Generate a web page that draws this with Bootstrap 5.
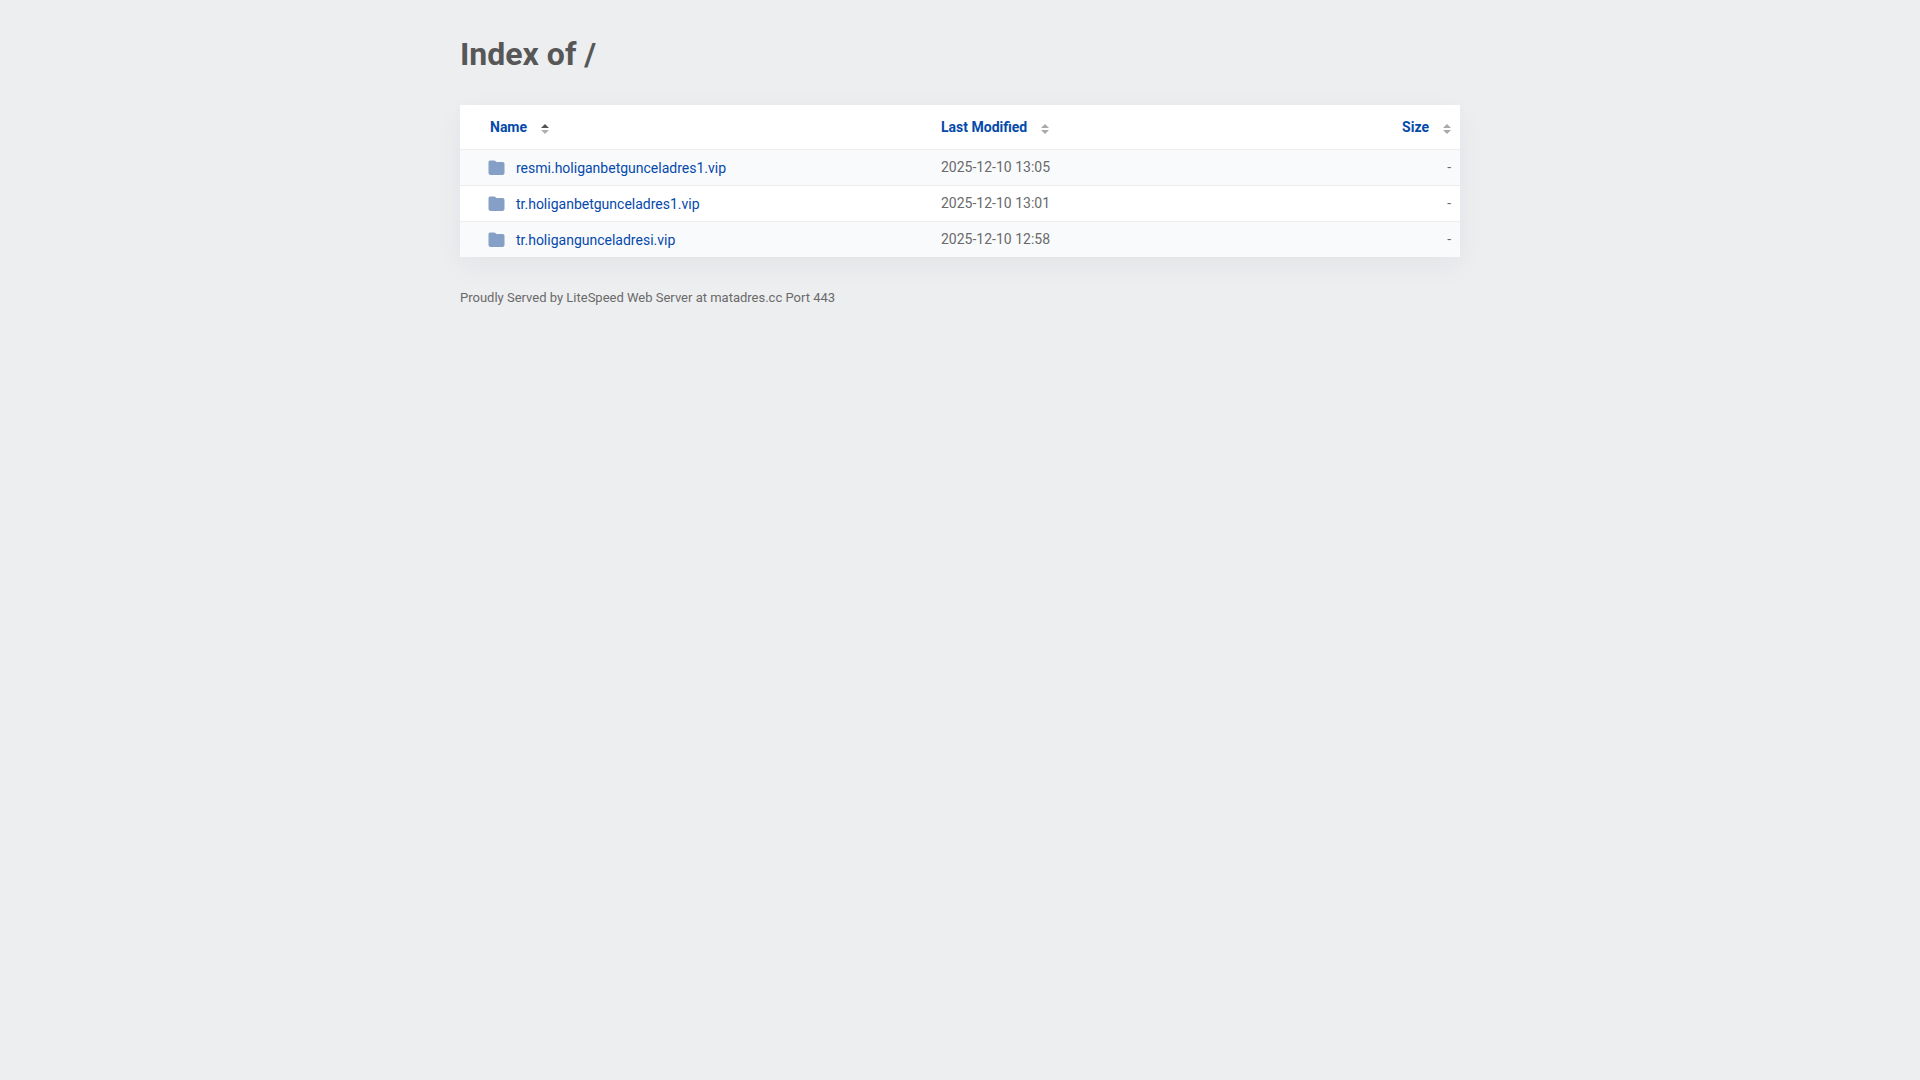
<!DOCTYPE html>
<html lang="en">
<head>
<meta charset="utf-8">
<meta name="viewport" content="width=device-width, initial-scale=1">
<title>Index of /</title>
<link href="https://cdn.jsdelivr.net/npm/bootstrap@5.3.0/dist/css/bootstrap.min.css" rel="stylesheet">
<style>
body { background: #edeef0; color: #575757; font: 14px/20px Roboto, sans-serif; }
.page { max-width: 1000px; }
h1 { font-size: 32px; line-height: 37px; color: #575757; }
a { color: #0449ab; }
a:hover { text-decoration: underline !important; }
.listing { background: #fff; box-shadow: 0 8px 26px rgba(0,40,50,.05); table-layout: fixed; color: #6a6a6a; }
.listing th { height: 44px; padding: 0 8px; vertical-align: middle; }
.listing td { height: 36px; padding: 0 8px; border-top: 1px solid #ebedef; vertical-align: middle; }
.listing th:first-child { padding-left: 30px; }
.listing td:first-child { padding-left: 28px; }
.listing th:last-child, .listing td:last-child { padding-right: 9px; }
.listing tbody tr:nth-child(odd) { background: #f9fafc; }
.c-name { width: 473px; }
.c-size { width: 120px; }
.sorter { margin: 2px 0 0 14px; }
.entry { gap: 11px; }
.foot { font-size: 13px; line-height: 18px; color: #6a6a6a; }
</style>
</head>
<body>
<main class="page container-fluid px-0 pt-1">
  <h1 class="fw-bold mb-0 py-4 mt-2">Index of /</h1>
  <table class="listing w-100 mt-2">
    <colgroup><col class="c-name"><col><col class="c-size"></colgroup>
    <thead><tr>
      <th scope="col"><a href="#" class="text-decoration-none">Name<svg class="sorter" width="8" height="10" viewBox="0 0 8 10" aria-hidden="true"><path d="M0 4 4 0l4 4z" fill="#545454"/><path d="M0 6h8L4 10z" fill="#b0b0b0"/></svg></a></th>
      <th scope="col"><a href="#" class="text-decoration-none">Last Modified<svg class="sorter" width="8" height="10" viewBox="0 0 8 10" aria-hidden="true"><path d="M0 4 4 0l4 4zM0 6h8L4 10z" fill="#a9a9a9"/></svg></a></th>
      <th scope="col" class="text-end"><a href="#" class="text-decoration-none">Size<svg class="sorter" width="8" height="10" viewBox="0 0 8 10" aria-hidden="true"><path d="M0 4 4 0l4 4zM0 6h8L4 10z" fill="#a9a9a9"/></svg></a></th>
    </tr></thead>
    <tbody>
      <tr><td><a href="#" class="entry d-inline-flex align-items-center align-middle text-decoration-none"><svg width="17" height="16" viewBox="0 0 17 16" aria-hidden="true"><path d="M2 .6h4.2q.7 0 1.200.5l1 1h6.300q1.800 0 1.800 1.800v9.200q0 1.800-1.800 1.800H2.300Q.5 14.900.5 13.100V2.200Q.5.600 2 .600z" fill="#869fc6"/></svg>resmi.holiganbetgunceladres1.vip</a></td><td>2025-12-10 13:05</td><td class="text-end">-</td></tr>
      <tr><td><a href="#" class="entry d-inline-flex align-items-center align-middle text-decoration-none"><svg width="17" height="16" viewBox="0 0 17 16" aria-hidden="true"><path d="M2 .6h4.2q.7 0 1.200.5l1 1h6.300q1.800 0 1.800 1.800v9.200q0 1.800-1.800 1.800H2.300Q.5 14.900.5 13.100V2.200Q.5.600 2 .600z" fill="#869fc6"/></svg>tr.holiganbetgunceladres1.vip</a></td><td>2025-12-10 13:01</td><td class="text-end">-</td></tr>
      <tr><td><a href="#" class="entry d-inline-flex align-items-center align-middle text-decoration-none"><svg width="17" height="16" viewBox="0 0 17 16" aria-hidden="true"><path d="M2 .6h4.2q.7 0 1.200.5l1 1h6.300q1.800 0 1.800 1.800v9.200q0 1.800-1.800 1.800H2.300Q.5 14.900.5 13.100V2.200Q.5.600 2 .600z" fill="#869fc6"/></svg>tr.holigangunceladresi.vip</a></td><td>2025-12-10 12:58</td><td class="text-end">-</td></tr>
    </tbody>
  </table>
  <footer class="foot mt-4 pt-2">Proudly Served by LiteSpeed Web Server at matadres.cc Port 443</footer>
</main>
<script src="https://cdn.jsdelivr.net/npm/bootstrap@5.3.0/dist/js/bootstrap.bundle.min.js"></script>
</body>
</html>
